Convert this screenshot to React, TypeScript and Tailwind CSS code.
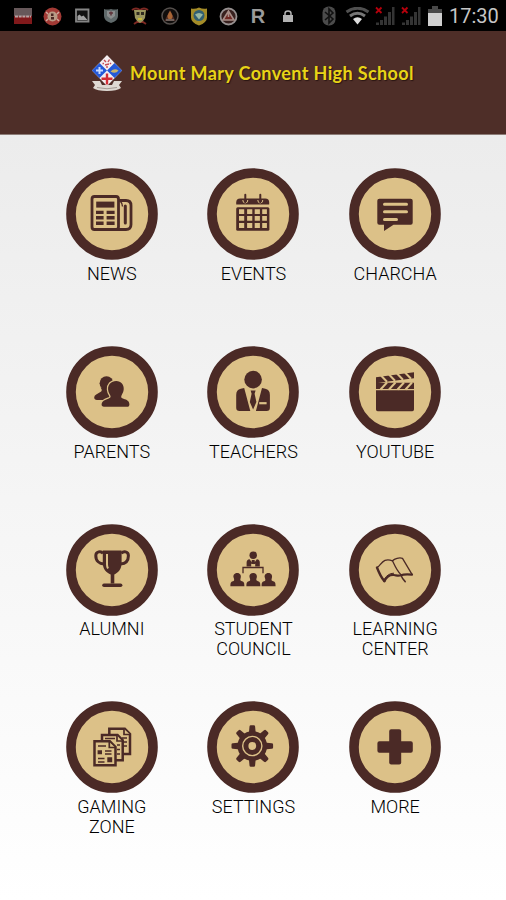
import type { ReactNode } from 'react';

const BROWN = '#4b2a26';
const TAN = '#dcc188';

interface MenuItem {
  label: string;
  icon: ReactNode;
}

// Every menu icon is drawn on the 92x92 area of its round button.
const newsIcon = (
  <g fill="none" stroke={BROWN} strokeWidth="2.8">
    <rect x="26" y="28.5" width="26.5" height="33" rx="2.5" />
    <path d="M52.5 32.5h7.5q5 0 5 5v19q0 5-5 5H49" />
    <path d="M54.5 33.5q2 2 2 5" strokeWidth="1.4" />
    <path d="M59.3 38v17" strokeWidth="3" strokeLinecap="round" />
    <path d="M30.2 36.6h18.2" strokeWidth="6" />
    <path d="M30 44.4h7.6M40.6 44.4h8M30 49.8h7.6M40.6 49.8h8M30 55.2h7.6M40.6 55.2h8" strokeWidth="3.4" />
  </g>
);

const eventsIcon = (
  <g>
    <path d="M29.2 36.6v-2.2q0-4 4-4h25q4 0 4 4v2.2z" fill={BROWN} />
    <path d="M35.8 32a2.5 3 0 1 0 5 0M50.8 32a2.5 3 0 1 0 5 0" fill="none" stroke={TAN} strokeWidth="1" />
    <path d="M38.3 26.8v7.4M53.3 26.8v7.4" stroke={BROWN} strokeWidth="2" strokeLinecap="round" />
    <rect x="29.2" y="39.2" width="33.2" height="23.6" rx="1.5" fill={BROWN} />
    <path
      d="M32 41.2h5.2v4.8H32zM40.1 41.2h5.2v4.8h-5.2zM47.7 41.2h5.2v4.8h-5.2zM55.2 41.2h4.7v4.8h-4.7zM32 48h5.2v4.8H32zM40.1 48h5.2v4.8h-5.2zM47.7 48h5.2v4.8h-5.2zM55.2 48h4.7v4.8h-4.7zM32 55h5.2v5H32zM40.1 55h5.2v5h-5.2zM47.7 55h5.2v5h-5.2zM55.2 55h4.7v5h-4.7z"
      fill={TAN}
    />
  </g>
);

const charchaIcon = (
  <g>
    <path d="M30.3 30.7h31.4q2 0 2 2v22q0 2-2 2H44.5L35 63v-6.3h-4.7q-2 0-2-2v-22q0-2 2-2z" fill={BROWN} />
    <path d="M35.5 36.3h22M35.5 43.8h22M35.5 51.4h12" stroke={TAN} strokeWidth="3" strokeLinecap="round" />
  </g>
);

const parentsIcon = (
  <g fill={BROWN}>
    <circle cx="40.5" cy="37.2" r="6.9" />
    <path d="M34.500 41.500 46 43v11H31q-2.800 0-2.800-2.400 0-1.800 2-3l5-3.200q1-1 .3-2.400z" />
    <path
      d="M50.200 35c5 0 7.900 3.800 7.500 8.600-.2 2.600-1.300 4.200-2.200 5.800-.9 1.800.2 2.800 2 3.400 3.400 1.100 5.700 2.200 5.900 5.400.1 1.700-.8 2.600-2.400 2.600H38c-1.600 0-2.600-.9-2.400-2.500.4-3.300 3-4.400 6.600-5.600 2-.6 3-1.600 2-3.400-.9-1.500-1.900-3.100-2.100-5.700-.4-4.800 3-8.600 8.100-8.600z"
      stroke={TAN}
      strokeWidth="2.600"
      paintOrder="stroke"
    />
  </g>
);

const teachersIcon = (
  <g>
    <circle cx="46.100" cy="33.600" r="8.800" fill={BROWN} />
    <path d="M37.200 42 43.300 65H32.500q-3.300 0-3.300-3.300V49q0-5.200 4.600-6.200zM55 42 48.900 65h10.700q3.300 0 3.300-3.300V49q0-5.200-4.600-6.200z" fill={BROWN} />
    <path d="M43.600 44.500h5l-1 3.200 1.800 8.300-3.300 7.600-3.300-7.600 1.800-8.300z" fill={BROWN} />
    <path d="M52.200 57.200h7.400" stroke={TAN} strokeWidth="2.200" />
  </g>
);

const youtubeIcon = (
  <g>
    <path d="M27 44.200h38V63.500q0 1.700-1.700 1.700H28.700q-1.700 0-1.700-1.700zM27 36.800h38v6.300H27zM27 31.300l38-5v6l-38 4.800z" fill={BROWN} />
    <path d="M32 29.500l6 6.200M40 28.500l6 6.200M48 27.500l6 6.200M56 26.500l6 6.200M38 36.500 31.500 43.500M46.500 36.500 40 43.500M55 36.500 48.500 43.500M63 36.500 56.500 43.500" stroke={TAN} strokeWidth="2" />
  </g>
);

const alumniIcon = (
  <g>
    <path d="M36.800 26.500h18.800V39c0 6.500-3.500 9.500-7.300 11.600v9h-3.600v-9c-4.200-2.100-7.900-5.100-7.900-11.600z" fill={BROWN} />
    <path d="M37 29.500c-2-2.800-7.200-2.200-7.200 2.200 0 5.300 3.700 8 8.200 8.400M55.400 29.500c2-2.800 7-2.200 7 2.200 0 5.300-3.500 8-8 8.400" fill="none" stroke={BROWN} strokeWidth="3" />
    <path d="M38 61.200h16.600" stroke={BROWN} strokeWidth="3.600" strokeLinecap="round" />
    <path d="M41 30v10.500q0 2.200 1 4" fill="none" stroke={TAN} strokeWidth="2" />
  </g>
);

const councilIcon = (
  <g fill={BROWN}>
    <circle cx="46.200" cy="31.200" r="3.700" />
    <path d="M39.600 42.500v-4q0-2.800 3-3.200l3.600 5 3.600-5q3 .4 3 3.200v4h-4.600v-3h-4v3z" />
    <path d="M44.800 36h2.800l.5 4h-3.800z" />
    <path d="M36 49.200v-5.700h20v5.700" fill="none" stroke={BROWN} strokeWidth="1.300" />
    <path d="M30.200 48.900c3 0 4.200 2.400 3.500 4.800-.7 2.300-.6 3 1.300 3.600 2 .6 2.400 1.500 2.400 4.900H23.400c0-3.400.4-4.300 2.400-4.900 1.500-.5 1.700-1.300.9-3.600-.9-2.400.5-4.800 3.500-4.800z" />
    <path d="M46.200 48.900c3 0 4.200 2.400 3.500 4.800-.7 2.300-.6 3 1.300 3.600 2 .6 2.400 1.500 2.400 4.900H39.400c0-3.400.4-4.300 2.400-4.900 1.500-.5 1.700-1.300.9-3.600-.9-2.400.5-4.800 3.500-4.800z" />
    <path d="M61.400 48.900c3 0 4.200 2.400 3.500 4.800-.7 2.300-.6 3 1.300 3.600 2 .6 2.400 1.500 2.400 4.900H54.600c0-3.400.4-4.300 2.400-4.900 1.500-.5 1.700-1.300.9-3.600-.9-2.400.5-4.800 3.500-4.800z" />
  </g>
);

const learningIcon = (
  <g fill="none" stroke={BROWN} strokeLinejoin="round" strokeLinecap="round">
    <path d="M28 43.500c2.800-.8 4-5.500 8-7.200 3-1.100 5.500-.3 7.500.5 2-2.200 6.800-3.600 10-2.500L63 50.400" strokeWidth="1.300" />
    <path d="M43.500 36.800c2.200 4.600 4 9.500 8.200 13.600" strokeWidth="1.300" />
    <path d="M28 43.500c1.800 4.800 3.600 9.300 7.400 13.600" strokeWidth="2.400" />
    <path d="M35.400 57.200c2.200-4.600 5.600-6.600 9.600-6.200 2.500.3 4.600 1.200 6.800.2 3.800-1.300 7.400-1 11.200-.6" strokeWidth="2.200" />
    <path d="M35.600 54.800c2-3.400 5-5.600 9-5.600" strokeWidth="1" />
    <path d="M51.800 51c1 2.600 2.400 4.600 4.400 6.600" strokeWidth="1.500" />
  </g>
);

const gamingIcon = (
  <g fill={TAN} stroke={BROWN} strokeWidth="2.500">
    <path d="M43.300 27.700h15.500l5.200 5.200v20H43.300z" />
    <path d="M58 28v5.500h6M56 37h5M57 41h4M57 45h4" strokeWidth="1.700" />
    <path d="M36 34.100h15.500l5.200 5.200v20H36z" />
    <path d="M39 37.500h10M51 34.500V40h5M51 44h3M51 48.500h3M51 53h3" strokeWidth="1.700" />
    <path d="M28.500 40.300h15.300l5.700 5.700v18.300h-21z" />
    <path d="M43.300 41v5.500h5.700M32 45h8M39 50h6.500M39 53h6.500M32 57.500h6.500M32 61h6.500" strokeWidth="1.700" />
    <path d="M32.300 50h3v2.500h-3zM42 57h3.500v3.500H42z" strokeWidth="1.400" fill={BROWN} />
  </g>
);

const GEAR_TEETH = [0, 45, 90, 135, 180, 225, 270, 315];

const settingsIcon = (
  <g>
    {GEAR_TEETH.map((angle) => (
      <path key={angle} d="M41.800 33 42.500 25.600q.1-1.400 1.300-1.400h3q1.200 0 1.300 1.400L48.800 33z" fill={BROWN} transform={`rotate(${angle} 45.300 45)`} />
    ))}
    <circle cx="45.300" cy="45" r="14.800" fill={BROWN} />
    <circle cx="45.300" cy="45" r="9.600" fill="none" stroke={TAN} strokeWidth="1.400" />
    <circle cx="45.300" cy="45" r="3.900" fill={TAN} />
  </g>
);

const moreIcon = (
  <path
    d="M42.200 28.200h8q2 0 2 2v10h9.600q2 0 2 2v7.600q0 2-2 2h-9.600v9.600q0 2-2 2h-8q-2 0-2-2v-9.600h-9.800q-2 0-2-2v-7.600q0-2 2-2h9.800v-10q0-2 2-2z"
    fill={BROWN}
  />
);

const ITEMS: MenuItem[] = [
  { label: 'NEWS', icon: newsIcon },
  { label: 'EVENTS', icon: eventsIcon },
  { label: 'CHARCHA', icon: charchaIcon },
  { label: 'PARENTS', icon: parentsIcon },
  { label: 'TEACHERS', icon: teachersIcon },
  { label: 'YOUTUBE', icon: youtubeIcon },
  { label: 'ALUMNI', icon: alumniIcon },
  { label: 'STUDENT COUNCIL', icon: councilIcon },
  { label: 'LEARNING CENTER', icon: learningIcon },
  { label: 'GAMING ZONE', icon: gamingIcon },
  { label: 'SETTINGS', icon: settingsIcon },
  { label: 'MORE', icon: moreIcon },
];

function SignalIcon() {
  return (
    <svg width="20" height="20" viewBox="0 0 20 20">
      <path d="M1 19v-2.500h3V19zM5 19v-5h3v5zM9 19v-8.500h3V19zM13 19V6h3v13zM17 19V1h2.500v18z" fill="#343434" />
      <path d="M1 1.500 6.500 7M6.500 1.500 1 7" stroke="#b5000c" strokeWidth="1.800" />
    </svg>
  );
}

function StatusBar() {
  return (
    <div className="flex h-[31px] items-center bg-black pl-[14px] pr-[7px] pt-px">
      <div className="flex flex-1 items-center gap-[11px]">
        <svg width="18" height="18" viewBox="0 0 18 18">
          <path d="M0 1h18v8H0z" fill="#67585a" />
          <path d="M0 9h18v8H0z" fill="#81191b" />
          <path d="M1 9.500h16" stroke="#b8a3a3" strokeWidth="2" strokeDasharray="3 .7" fill="none" />
        </svg>
        <svg width="19" height="19" viewBox="0 0 19 19">
          <circle cx="9.500" cy="9.500" r="9" fill="#a23a35" />
          <path d="M3 5 5 7M16 5l-2 2M3 14l2-2M16 14l-2-2" stroke="#d0aaa0" strokeWidth="1.500" />
          <circle cx="9.500" cy="9.500" r="5" fill="#b99b86" />
          <path d="M8 6.500h2.500v2.500H8zM8 10h3v2.500H8z" fill="#4b2723" />
        </svg>
        <svg width="17" height="18" viewBox="0 0 17 18" className="ml-px">
          <path d="M2 2.500h12.500v12H2z" fill="#111" stroke="#858585" strokeWidth="1.800" />
          <path d="M3.500 13V9l2-1.500 2 2 2-1 4 4.500z" fill="#a0a0a0" />
        </svg>
        <svg width="18" height="18" viewBox="0 0 18 18">
          <path d="M2 2q3 1 7 0 4 1 7 0v7q0 5-7 7-7-2-7-7z" fill="#606a6b" />
          <path d="M5 4h8v5l-4 3-4-3z" fill="#8a8d8d" />
          <path d="M9 4.500v4M7 6h4" stroke="#5e343a" strokeWidth="1.500" />
        </svg>
        <svg width="18" height="19" viewBox="0 0 18 19">
          <path d="M1 3q4-3 8 0 4-3 8 0M3 17l3-2h6l3 2" stroke="#7d2923" strokeWidth="2" fill="none" />
          <path d="M3 3h12l-1 8q-2 4-5 5-3-1-5-5z" fill="#9a965e" />
          <path d="M5.500 5h3v3h-3zM10 5h3v3h-3z" fill="#302c20" />
          <path d="M7 11h4v2H7z" fill="#c5b93c" />
        </svg>
        <svg width="18" height="18" viewBox="0 0 18 18" className="ml-px">
          <circle cx="9" cy="9" r="8" fill="#100d0c" stroke="#55504d" strokeWidth="1.500" />
          <path d="M9 3 3.500 14h11z" fill="#4c2b24" />
          <path d="M9 4q4 5 1.500 8h-3Q5 9 9 4z" fill="#a86535" />
          <path d="M5 13h8" stroke="#78726d" strokeWidth="1.500" />
        </svg>
        <svg width="18" height="19" viewBox="0 0 18 19">
          <path d="M1 1.500q4 1 8-1 4 2 8 1v9q0 5-8 8-8-3-8-8z" fill="#a48c28" />
          <circle cx="9" cy="8.500" r="5.500" fill="#315f72" />
          <path d="M5 7.500q4-3 8 0l-4 5z" fill="#98b7a1" />
        </svg>
        <svg width="19" height="19" viewBox="0 0 19 19">
          <circle cx="9.500" cy="9.500" r="8" fill="#38201e" stroke="#969090" strokeWidth="1.800" />
          <path d="M4 13 9.500 4l5.500 9zM9.500 4v6" stroke="#a78d87" strokeWidth="1.600" fill="#702823" />
        </svg>
        <span className="ml-px w-[16px] text-center font-['Liberation_Sans',sans-serif] text-[20px] font-bold leading-[19px] text-[#9b9b9b]">R</span>
        <svg width="12" height="14" viewBox="0 0 12 14" className="ml-[5px]">
          <path d="M1 6h10v7H1z" fill="#b2b2b2" />
          <path d="M3 7V4.500Q3 2 6 2t3 2.500V7" fill="none" stroke="#b2b2b2" strokeWidth="1.500" />
        </svg>
      </div>
      <div className="flex items-center">
        <svg width="14" height="20" viewBox="0 0 14 20">
          <rect x=".5" y=".5" width="13" height="19" rx="6" fill="#4b4b4b" />
          <path d="m3 6 8 7-4 4V3l4 4-8 7" stroke="#111" strokeWidth="1.600" fill="none" />
        </svg>
        <svg width="25" height="18" viewBox="0 0 25 18" className="ml-[9px]">
          <path d="M1.500 5q11-7.500 22 0" stroke="#505050" strokeWidth="3" fill="none" />
          <path d="M5 9q7.500-5.500 15 0" stroke="#777" strokeWidth="3" fill="none" />
          <path d="M8 12q4.500-3.500 9 0l-4.500 5.500z" fill="#ddd" />
        </svg>
        <div className="ml-[5px] flex gap-[6px]">
          <SignalIcon />
          <SignalIcon />
        </div>
        <svg width="14" height="20" viewBox="0 0 14 20" className="ml-[7px]">
          <path d="M4 0h6v3h4v4H0V3h4z" fill="#494949" />
          <path d="M0 7h14v13H0z" fill="#d0d0d0" />
        </svg>
        <span className="ml-[7px] w-[50px] whitespace-nowrap font-['Roboto',sans-serif] text-[20px] leading-[28px] text-[#c6c6c6]">17:30</span>
      </div>
    </div>
  );
}

function SchoolCrest() {
  return (
    <svg width="32" height="36" viewBox="0 0 32 36">
      <path d="M16 0 31 15.500 16 31 1 15.500z" fill="#f4eef0" />
      <path d="M8.500 8 16 15.500 8.500 23 1 15.500zM23.500 8 31 15.500 23.500 23 16 15.500z" fill="#2459d8" />
      <path d="M8.500 12v7M5 15.500h7" stroke="#c8dcff" strokeWidth="2" />
      <path d="M19.500 16.500q4-4 8-1-3 4-8 1z" fill="#c9b46a" />
      <path d="M13 5l2 2M18.500 4.500 17 7M14 10l4-1M16 11v2M11.500 8.500h1.500M19 8l1 1" stroke="#c84b53" strokeWidth="1.400" />
      <path d="M1 26h8l2 4h10l2-4h8l-3 4 2 3q-4 3-14 3T2 33l2-3z" fill="#ded9d3" />
      <path d="M6 32.500q10 2.500 20 0" stroke="#a39a93" strokeWidth="1" fill="none" />
      <path d="M16 18.500v11M10.500 23.800h11" stroke="#d22d35" strokeWidth="2.400" />
    </svg>
  );
}

function Header() {
  return (
    <header className="h-[104px] border-b border-[#8c7c77] bg-[#4e2e28] pt-[24px]">
      <div className="flex items-center pl-[91px]">
        <SchoolCrest />
        <h1 className="ml-[7px] whitespace-nowrap font-['Lato',sans-serif] text-[18px] font-bold leading-[34px] tracking-[0.38px] text-[#e8d417] [text-shadow:1px_1px_1px_#2a1512]">
          Mount Mary Convent High School
        </h1>
      </div>
    </header>
  );
}

function MenuButton({ label, icon }: MenuItem) {
  return (
    <button className="flex flex-col items-center">
      <svg width="92" height="92" viewBox="0 0 92 92">
        <circle cx="46" cy="46" r="41" fill={TAN} stroke={BROWN} strokeWidth="9.600" />
        {icon}
      </svg>
      <span className="mt-[3.500px] w-[100px] text-center font-['Roboto',sans-serif] text-[18px] font-light leading-[20px] text-black">
        {label}
      </span>
    </button>
  );
}

export default function App() {
  return (
    <div className="flex h-[900px] w-[506px] flex-col overflow-hidden bg-white">
      <StatusBar />
      <Header />
      <main className="flex-1 bg-linear-to-b from-[#ececec] to-white pl-[41px] pt-[33.400px]">
        <div className="grid w-[425px] auto-rows-[177.700px] grid-cols-3 items-start">
          {ITEMS.map((item) => (
            <MenuButton key={item.label} label={item.label} icon={item.icon} />
          ))}
        </div>
      </main>
    </div>
  );
}
